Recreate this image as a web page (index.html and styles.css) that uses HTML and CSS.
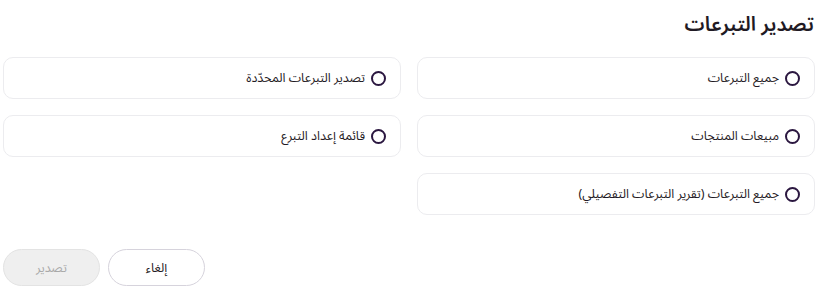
FILE: index.html
```html
<!DOCTYPE html>
<html lang="ar" dir="rtl">
<head>
  <meta charset="UTF-8" />
  <title>تصدير التبرعات</title>
  <link rel="stylesheet" href="styles.css">
</head>
<body>
  <div class="panel">
    <h2 class="title">تصدير التبرعات</h2>

    <div class="options">
      <label class="option"><span class="radio"></span>جميع التبرعات</label>
      <label class="option"><span class="radio"></span>تصدير التبرعات المحدّدة</label>
      <label class="option"><span class="radio"></span>مبيعات المنتجات</label>
      <label class="option"><span class="radio"></span>قائمة إعداد التبرع</label>
      <label class="option"><span class="radio"></span>جميع التبرعات (تقرير التبرعات التفصيلي)</label>
    </div>

    <div class="actions">
      <button class="btn btn-cancel">إلغاء</button>
      <button class="btn btn-export" disabled>تصدير</button>
    </div>
  </div>
</body>
</html>
```

FILE: styles.css
```css
body {
  margin: 0;
  background: #fff;
  font-family: "Noto Sans Arabic", "DejaVu Sans", sans-serif;
  color: #1f1a24;
}
.panel {
  padding: 8px 7px 0 3px;
}
.title {
  margin: 0 0 15px;
  font-size: 20px;
  font-weight: 600;
  line-height: 34px;
  padding-right: 1px;
}
.options {
  display: grid;
  grid-template-columns: 1fr 1fr;
  column-gap: 16px;
  row-gap: 16px;
}
.option {
  display: flex;
  align-items: center;
  gap: 6px;
  height: 40px;
  padding: 0 14px;
  border: 1px solid #ececef;
  border-radius: 10px;
  font-size: 12.5px;
}
.radio {
  width: 11px;
  height: 11px;
  border: 2px solid #2b1740;
  border-radius: 50%;
  flex: none;
}
.actions {
  display: flex;
  gap: 8px;
  margin-top: 34px;
  justify-content: flex-end;
}
.btn {
  width: 97px;
  height: 37px;
  border-radius: 19px;
  font-family: inherit;
  font-size: 12.5px;
}
.btn-cancel {
  background: #fff;
  border: 1px solid #d6d3dc;
  color: #1f1a24;
}
.btn-export {
  background: #efefef;
  border: 1px solid #e3e3e3;
  color: #a9a9a9;
}
```
